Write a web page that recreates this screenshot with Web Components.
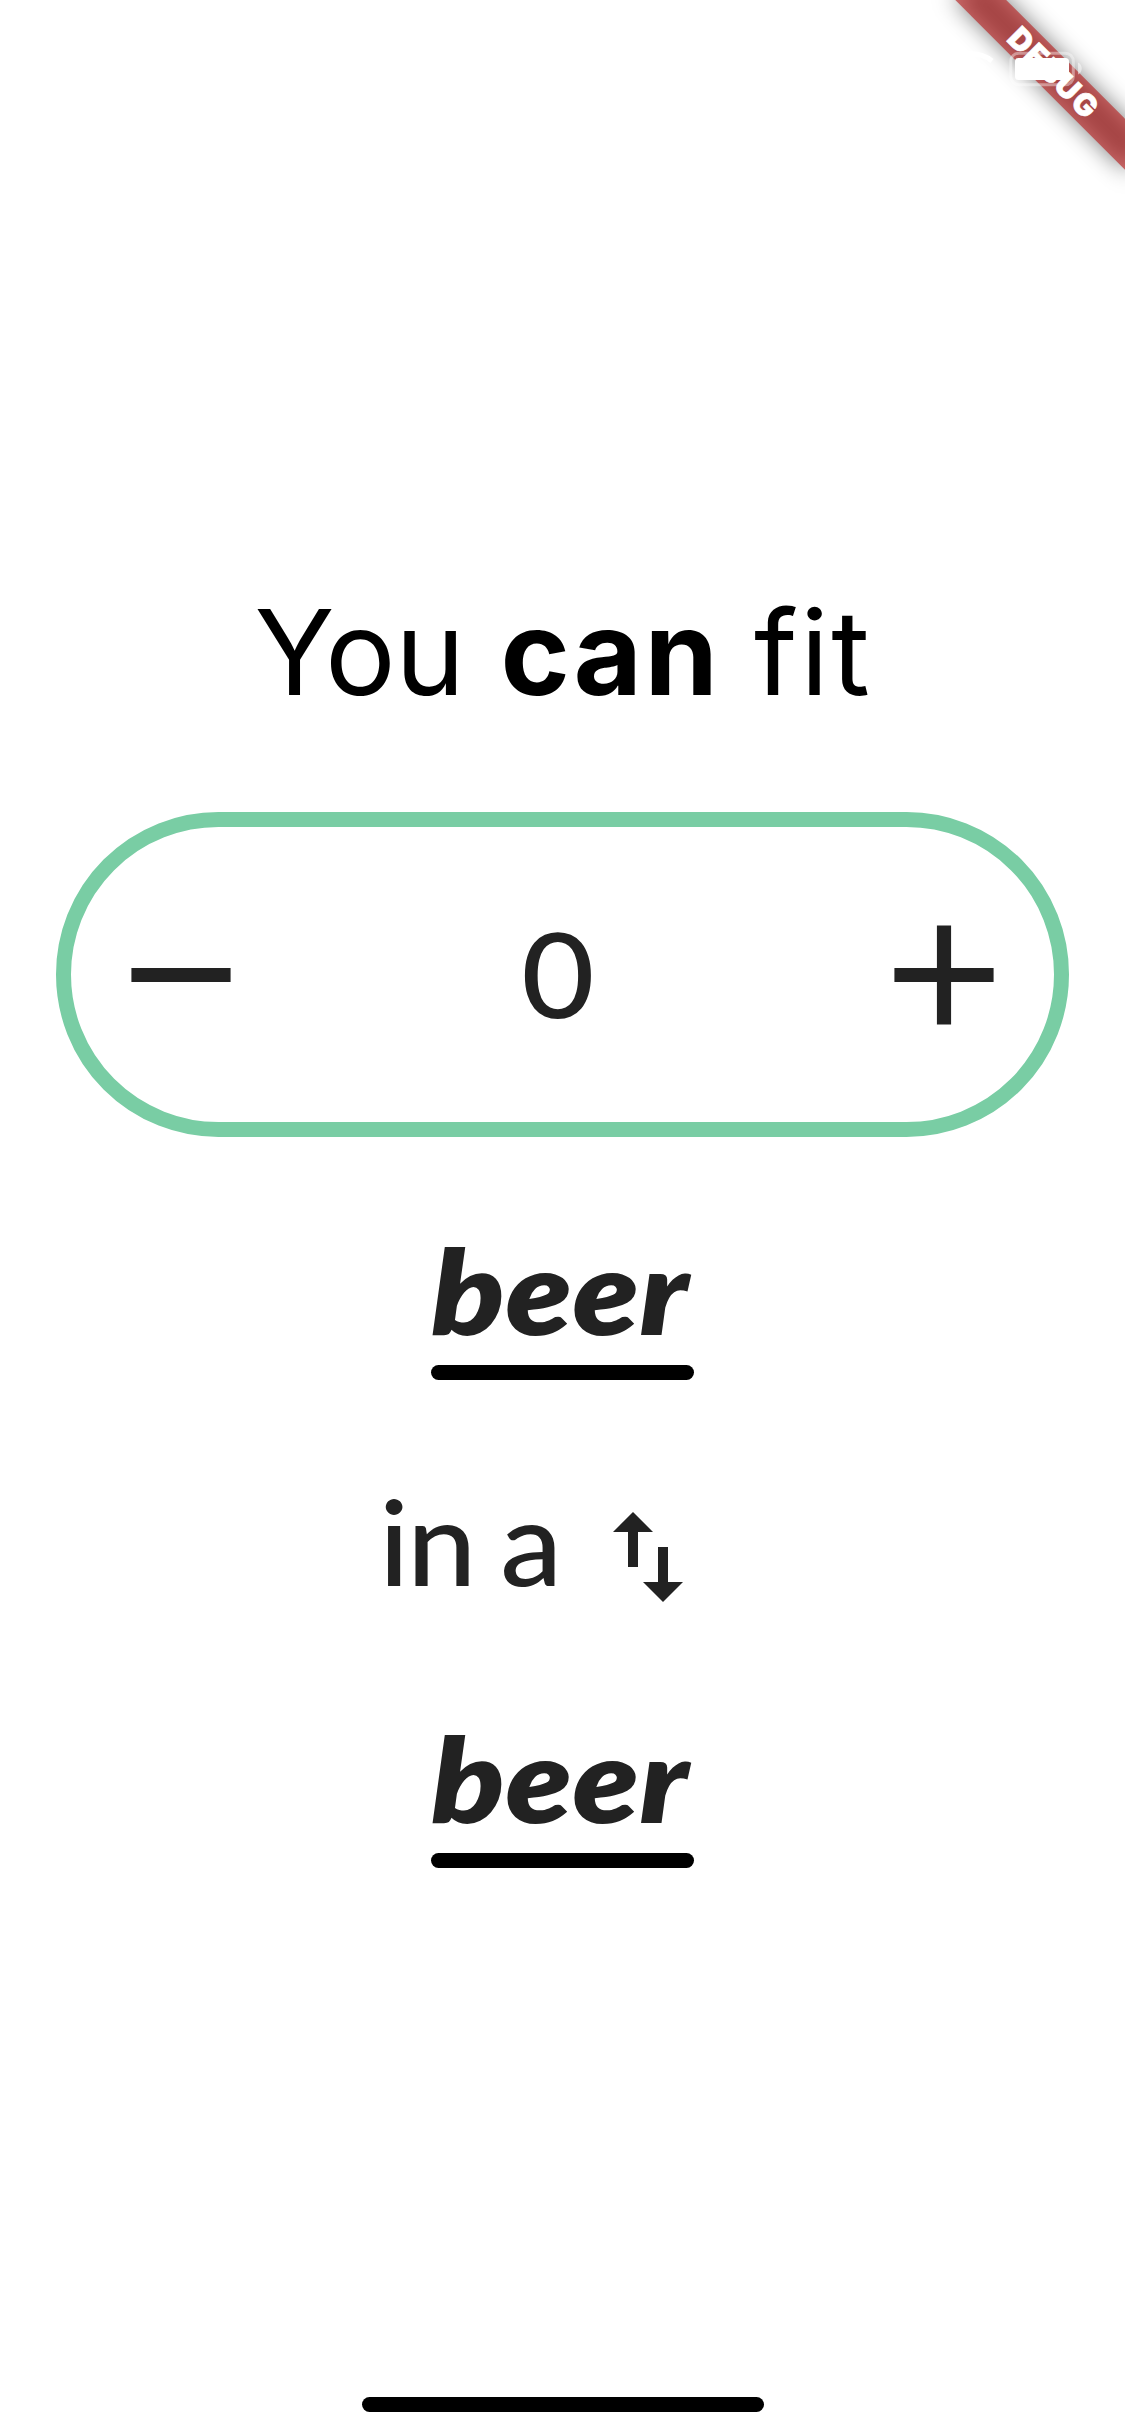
<!DOCTYPE html>
<html lang="en">
<head>
<meta charset="utf-8">
<title>You can fit</title>
<style>
html,body{margin:0;background:#fff}
body{width:1125px;height:2436px;overflow:hidden}
</style>
</head>
<body>
<fit-app></fit-app>
<script>
function define(name, html) {
  const template = document.createElement('template');
  template.innerHTML = html;
  customElements.define(name, class extends HTMLElement {
    constructor() {
      super();
      this.attachShadow({mode: 'open'}).append(template.content.cloneNode(true));
    }
  });
}

define('fit-heading', `
<style>
:host{display:flex;justify-content:flex-start;height:120px;font:400 118px/120px Inter,sans-serif;color:#000;white-space:pre}
span{display:block}
.a{width:246px;letter-spacing:-.5px}
.b{width:253.5px;font-weight:700;letter-spacing:2.5px}
.c{letter-spacing:2.5px}
</style>
<span class="a">You</span><span class="b">can</span><span class="c">fit</span>`);

define('count-stepper', `
<style>
:host{display:flex;box-sizing:border-box;width:1012.5px;height:324.7px;border:15px solid #79cda4;border-radius:162.4px;align-items:center;justify-content:space-between;padding:1px 25px 0 25px;color:#222}
svg{display:block;width:170px;height:170px;fill:#222}
span{font:500 117px/120px Lato,sans-serif;margin:0 9px 3px 0;transform:scaleX(1.08)}
</style>
<svg viewBox="0 0 24 24"><path d="M5 11h14v2H5z"/></svg>
<span><slot></slot></span>
<svg viewBox="0 0 24 24"><path d="M19 13h-6v6h-2v-6H5v-2h6V5h2v6h6z"/></svg>`);

define('item-picker', `
<style>
:host{display:flex;flex-direction:column;width:263px;color:#222}
span{font:italic 800 117px/120px Lato,sans-serif;letter-spacing:.5px;white-space:nowrap;transform:scaleX(1.15);transform-origin:0 50%}
i{display:block;height:15px;border-radius:7.5px;background:#000;margin-top:15.5px}
</style>
<span><slot></slot></span><i></i>`);

define('swap-row', `
<style>
:host{display:flex;align-items:flex-start;height:136px;color:#222}
span{font:500 117px/120px Lato,sans-serif;width:209px;white-space:nowrap;letter-spacing:-2px;word-spacing:-3px;transform:scaleX(1.06);transform-origin:0 50%}
svg{display:block;width:120px;height:120px;margin-top:16px;fill:#222}
</style>
<span><slot></slot></span>
<svg viewBox="0 0 24 24"><path d="M16 17.01V10h-2v7.01h-3L15 21l4-3.99h-3zM9 3L5 6.99h3V14h2V6.99h3L9 3z"/></svg>`);

define('debug-banner', `
<style>
:host{display:block;position:absolute;top:0;right:0;width:225px;height:225px}
svg{display:block}
text{font:900 30.6px Inter,sans-serif;fill:#fff}
</style>
<svg width="225" height="225" viewBox="900 0 225 225">
<defs><filter id="s" filterUnits="userSpaceOnUse" x="-200" y="0" width="400" height="200"><feGaussianBlur stdDeviation="11.9"/></filter></defs>
<g transform="translate(1125 0) rotate(45)">
<rect x="-120" y="84" width="240" height="36" fill="#000" fill-opacity=".5" filter="url(#s)"/>
<rect x="-120" y="84" width="240" height="36" fill="#b71c1c" fill-opacity=".627"/>
<text x="-56" y="113" textLength="113" stroke="#fff" stroke-width=".6">DEBUG</text>
</g>
<path d="M951 61a33 33 0 0 1 41 0" fill="none" stroke="#fff" stroke-width="5"/>
<path d="M958 69a22 22 0 0 1 27 0" fill="none" stroke="#fff" stroke-width="5"/>
<rect x="1010.8" y="53.2" width="62.5" height="31.5" rx="8" fill="none" stroke="#fff" stroke-opacity=".4" stroke-width="3"/>
<rect x="1015" y="58" width="54" height="22" rx="3.5" fill="#fff"/>
<path d="M1078 62.500c5 2 5 10 0 12z" fill="#fff" fill-opacity=".5"/>
</svg>`);

define('home-indicator', `
<style>:host{display:block;width:402px;height:15px;border-radius:7.5px;background:#000}</style>`);

define('fit-app', `
<style>
:host{display:flex;flex-direction:column;align-items:flex-start;box-sizing:border-box;position:relative;width:1125px;height:2436px;padding:592px 0 24px;background:#fff;overflow:hidden}
fit-heading{margin-left:254.5px}
count-stepper{margin:100px 0 93px 56.25px}
item-picker{margin-left:431px}
swap-row{margin:100.4px 0 101px 379px}
home-indicator{margin:auto 0 0 362px}
</style>
<fit-heading></fit-heading>
<count-stepper>0</count-stepper>
<item-picker>beer</item-picker>
<swap-row>in a</swap-row>
<item-picker>beer</item-picker>
<home-indicator></home-indicator>
<debug-banner></debug-banner>`);
</script>
</body>
</html>
